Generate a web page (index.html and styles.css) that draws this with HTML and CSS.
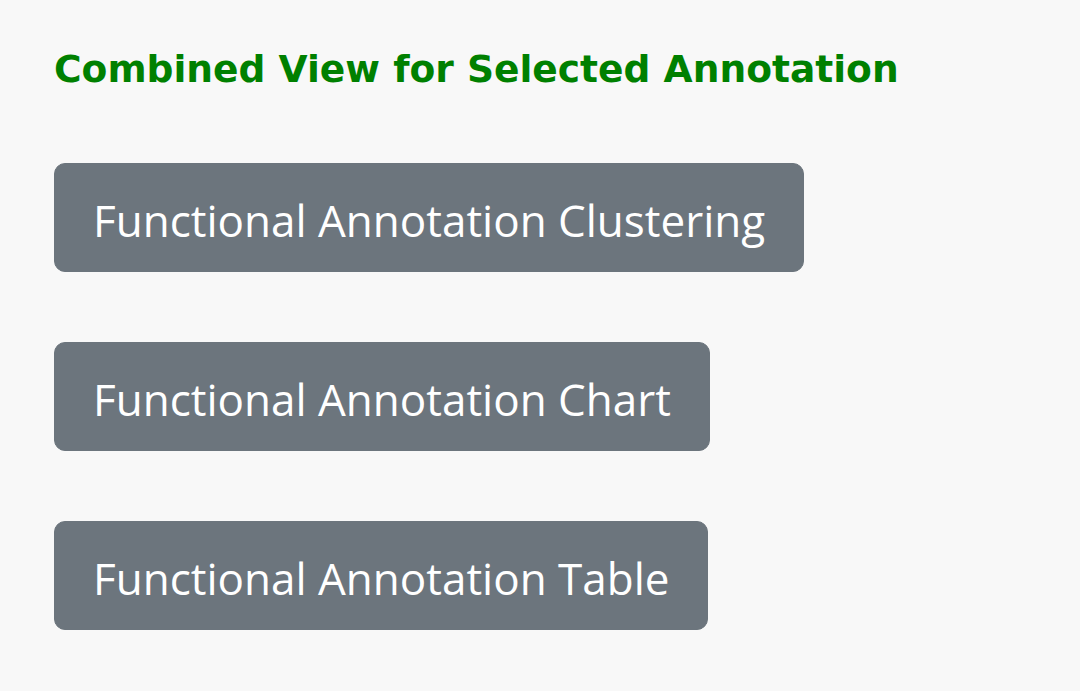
FILE: index.html
```html
<!DOCTYPE html>
<html>
<head>
<meta charset="utf-8">
<link rel="stylesheet" href="styles.css">
</head>
<body>
<main class="panel">
  <h4 class="title">Combined View for Selected Annotation</h4>
  <div class="actions">
    <button class="btn">Functional Annotation Clustering</button>
    <button class="btn">Functional Annotation Chart</button>
    <button class="btn">Functional Annotation Table</button>
  </div>
</main>
</body>
</html>
```
FILE: styles.css
```css
html, body {
  margin: 0;
  padding: 0;
  background: #f8f8f8;
}
.panel {
  padding: 43px 0 0 54px;
}
.title {
  margin: 0;
  font-family: "DejaVu Sans", Verdana, sans-serif;
  font-weight: bold;
  font-size: 37.6px;
  line-height: 52px;
  color: #008000;
}
.actions {
  display: flex;
  flex-direction: column;
  align-items: flex-start;
  gap: 70px;
  margin-top: 68px;
}
.btn {
  font-family: "Open Sans", sans-serif;
  font-size: 44px;
  letter-spacing: 0;
  line-height: 68px;
  height: 109px;
  padding: 4px 38px 0;
  color: #fff;
  background: #6c757d;
  border: 1px solid #6c757d;
  border-radius: 11px;
  cursor: pointer;
}
```
